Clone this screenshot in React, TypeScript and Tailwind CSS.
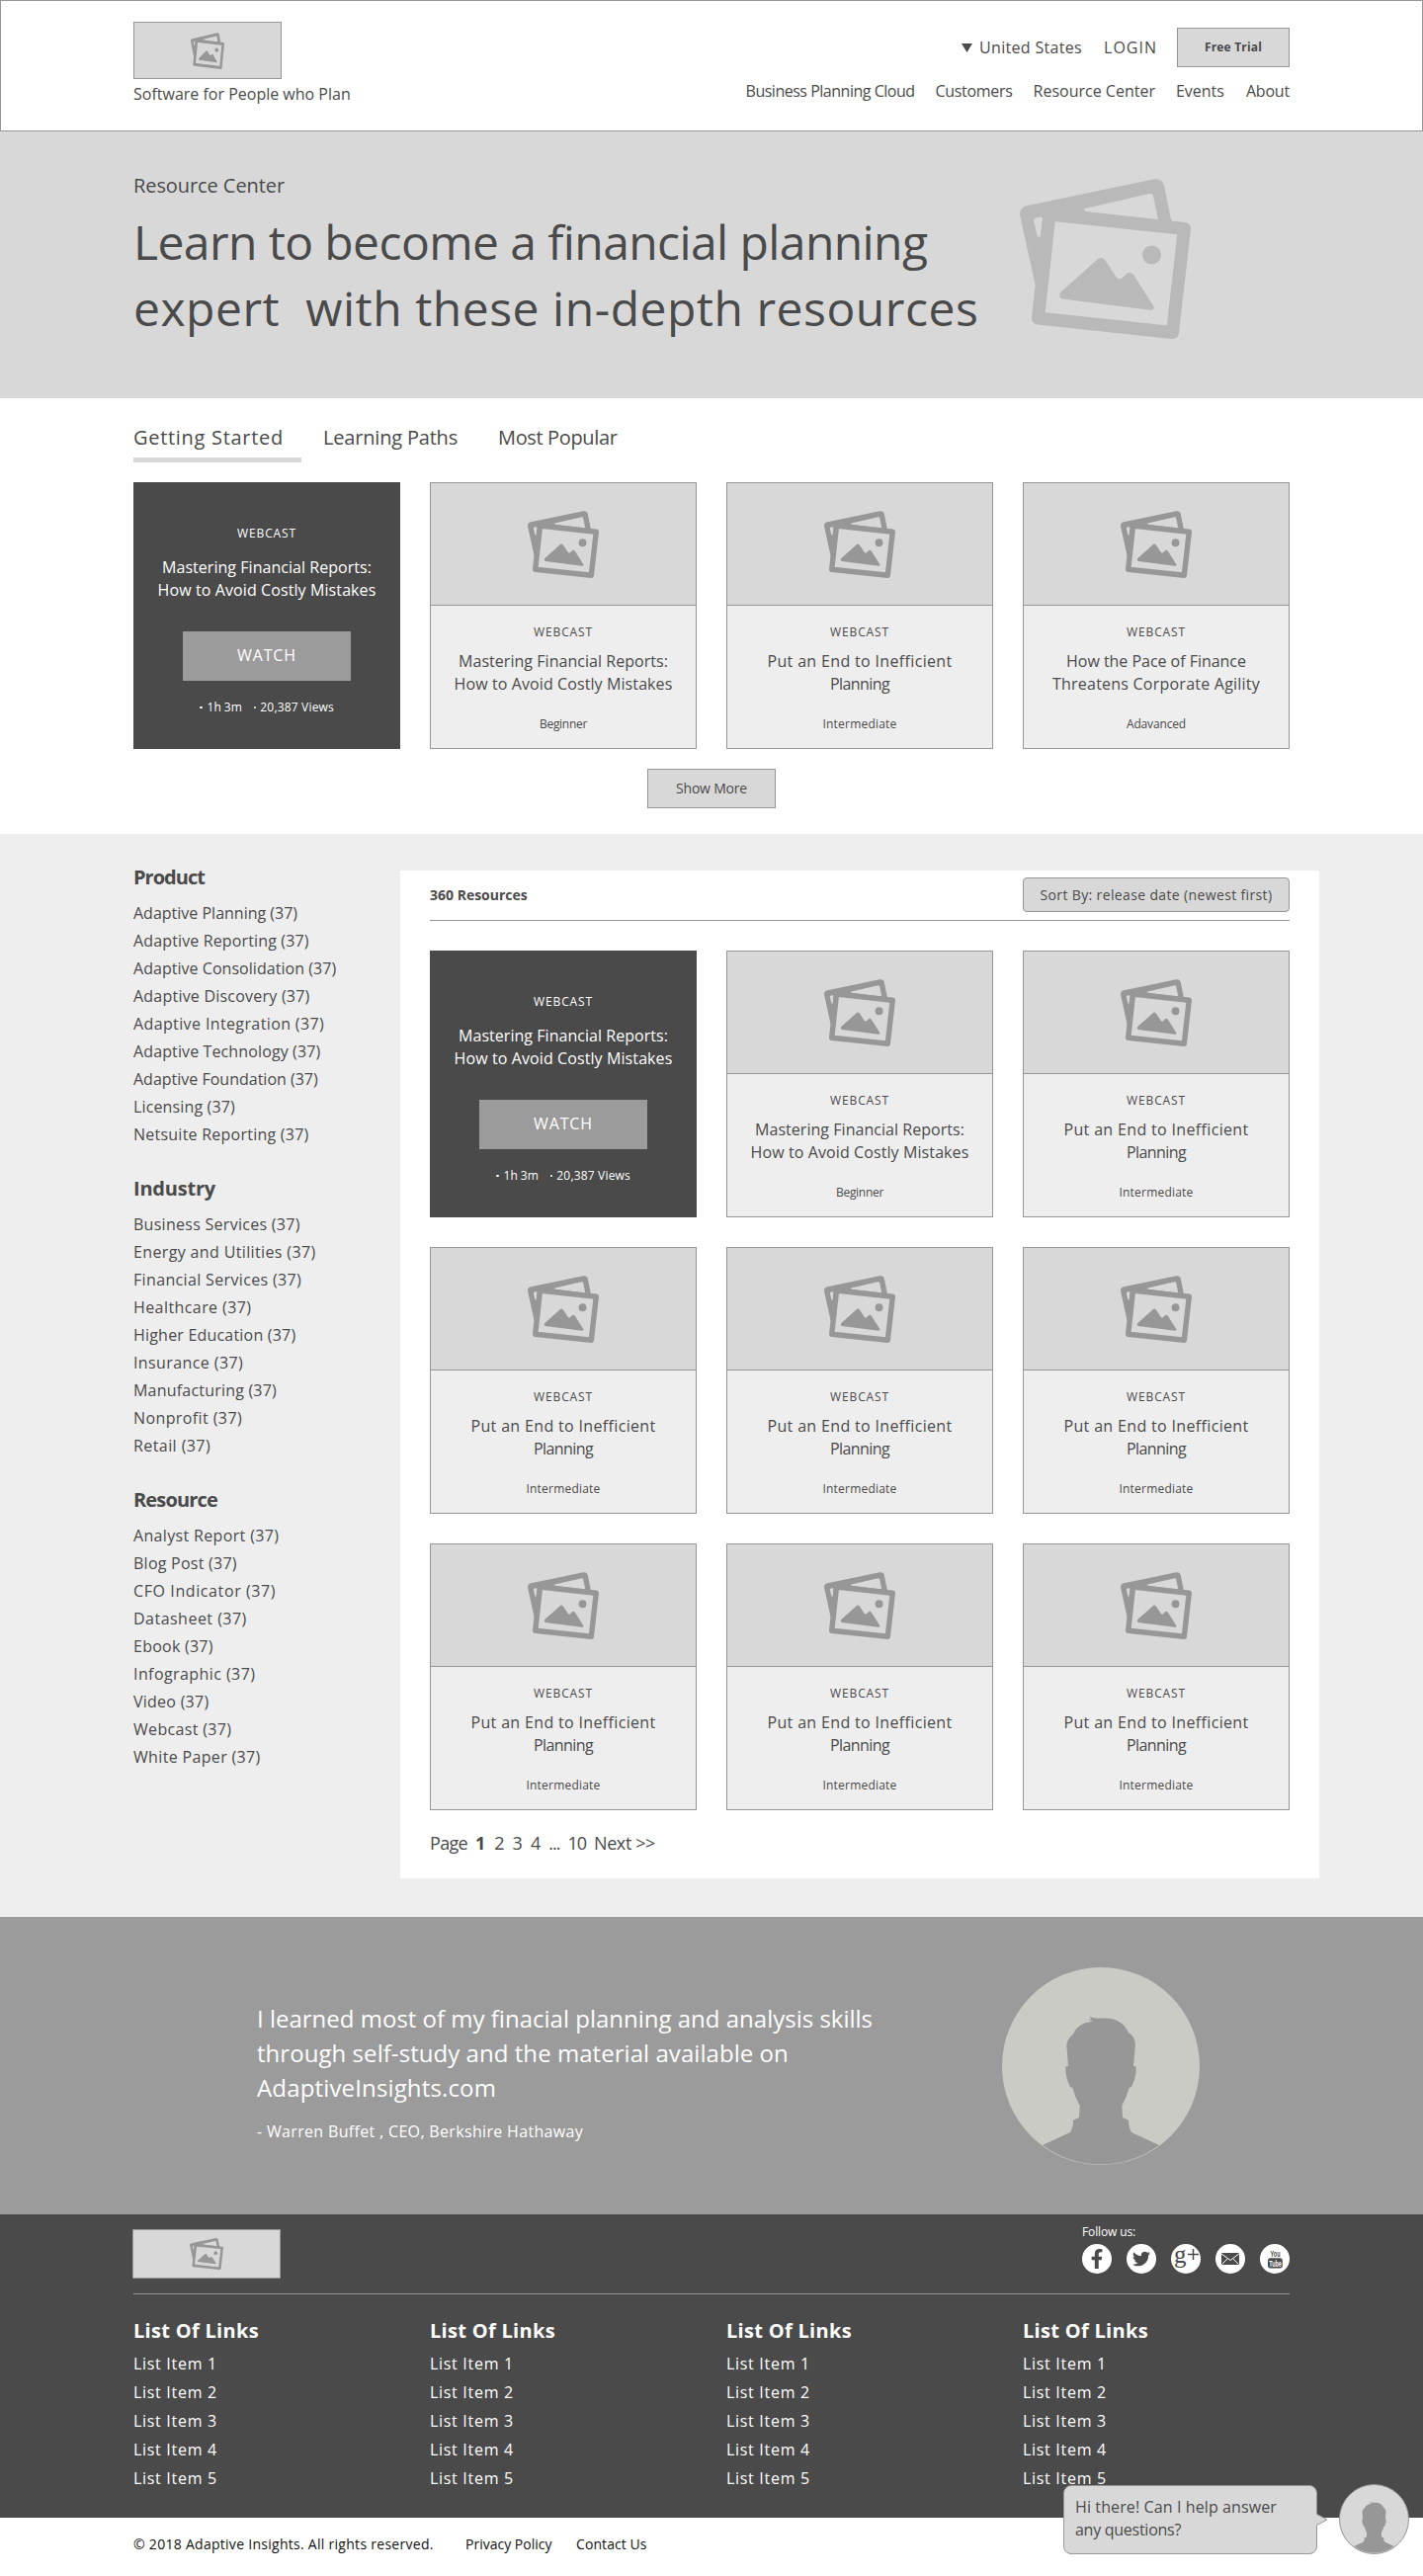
import type { ReactNode } from "react";
import { FaFacebookF, FaTwitter } from "react-icons/fa";

type Line = { text: string; tracking?: string };

const MASTERING: Line[] = [
  { text: "Mastering Financial Reports:", tracking: "tracking-[0.04px]" },
  { text: "How to Avoid Costly Mistakes", tracking: "tracking-[0.1px]" },
];
const INEFFICIENT: Line[] = [
  { text: "Put an End to Inefficient", tracking: "tracking-[0.34px]" },
  { text: "Planning", tracking: "tracking-[-0.59px]" },
];
const PACE: Line[] = [
  { text: "How the Pace of Finance", tracking: "tracking-[-0.03px]" },
  { text: "Threatens Corporate Agility", tracking: "tracking-[0.23px]" },
];

const LEVELS: Record<string, string> = {
  Beginner: "tracking-[-0.3px]",
  Intermediate: "tracking-[0.21px]",
  Adavanced: "tracking-[-0.16px]",
};

const FILTERS: { title: string; tracking: string; items: Line[] }[] = [
  {
    title: "Product",
    tracking: "tracking-[-0.97px]",
    items: [
      { text: "Adaptive Planning" },
      { text: "Adaptive Reporting", tracking: "tracking-[0.14px]" },
      { text: "Adaptive Consolidation", tracking: "tracking-[0.04px]" },
      { text: "Adaptive Discovery", tracking: "tracking-[0.22px]" },
      { text: "Adaptive Integration", tracking: "tracking-[0.38px]" },
      { text: "Adaptive Technology", tracking: "tracking-[0.12px]" },
      { text: "Adaptive Foundation" },
      { text: "Licensing", tracking: "tracking-[0.14px]" },
      { text: "Netsuite Reporting", tracking: "tracking-[0.24px]" },
    ],
  },
  {
    title: "Industry",
    tracking: "tracking-[-0.21px]",
    items: [
      { text: "Business Services", tracking: "tracking-[0.28px]" },
      { text: "Energy and Utilities", tracking: "tracking-[0.36px]" },
      { text: "Financial Services", tracking: "tracking-[0.35px]" },
      { text: "Healthcare", tracking: "tracking-[0.42px]" },
      { text: "Higher Education", tracking: "tracking-[0.2px]" },
      { text: "Insurance", tracking: "tracking-[0.4px]" },
      { text: "Manufacturing", tracking: "tracking-[0.2px]" },
      { text: "Nonprofit", tracking: "tracking-[0.4px]" },
      { text: "Retail", tracking: "tracking-[0.42px]" },
    ],
  },
  {
    title: "Resource",
    tracking: "tracking-[-0.83px]",
    items: [
      { text: "Analyst Report", tracking: "tracking-[0.34px]" },
      { text: "Blog Post", tracking: "tracking-[0.25px]" },
      { text: "CFO Indicator", tracking: "tracking-[0.6px]" },
      { text: "Datasheet", tracking: "tracking-[0.48px]" },
      { text: "Ebook", tracking: "tracking-[0.25px]" },
      { text: "Infographic", tracking: "tracking-[0.42px]" },
      { text: "Video", tracking: "tracking-[0.25px]" },
      { text: "Webcast", tracking: "tracking-[0.34px]" },
      { text: "White Paper", tracking: "tracking-[0.34px]" },
    ],
  },
];

function Pictures({ className }: { className: string }) {
  return (
    <svg viewBox="0 0 173 162" preserveAspectRatio="none" className={className} fill="currentColor">
      <path
        fillRule="evenodd"
        d="M15.6 107 L.3 38 Q-1 29 8 27 L135 .6 Q144 -1 146 7 L153 41 L155 48 L30 36 L20 105Z M66 30 L131 15 Q134 14.5 135 17 L140 41.5 L67 33 Q64 31.5 66 30Z M14 42 Q14.5 39.5 19 38.7 Q23.5 38 23 42 L21 57 Q19.5 61 17.5 57Z"
      />
      <path
        d="M30 36 L166.5 50.5 L154.5 155.5 L18.5 141Z"
        fill="none"
        stroke="currentColor"
        strokeWidth="13"
        strokeLinejoin="round"
      />
      <circle cx="133.500" cy="77" r="9.500" />
      <path d="M78 82 Q82 78 86 82 L98 100 Q101 102.500 104 100 L108 96 Q112 93.500 115 97 L135.500 129 Q136.500 133 132 132.800 L43 121.500 Q38.500 120 41 115Z" />
    </svg>
  );
}

function Person({ className }: { className: string }) {
  return (
    <svg viewBox="0 0 200 200" className={className}>
      <path
        fill="#979797"
        d="M67 100 L65.300 79 Q65.500 73 72 67.500 Q76 57 90 55 L92 54.500 L86 52.500 L90.500 52.800 L88.500 49.500 Q91 51.500 96 51.500 H107 Q122 53 128 66 Q135 70 134.800 79 L133 100 L135.700 100.500 Q136 111 131 121 L128.500 122 Q126.500 131 121.300 140 L122 152 L128 154.700 Q128 162 131 167 L159 180 A99 99 0 0 1 41 180 L69 167 Q72 162 72 154.700 L78 152 L78.700 140 Q73.500 131 71.500 122 L69 121 Q64 111 64.300 100.500Z"
      />
    </svg>
  );
}

function WatchCard() {
  return (
    <article className="flex h-[270px] flex-col items-center bg-[#4a4a4a] pt-[42px] text-white">
      <p className="text-xs leading-5 tracking-[0.88px]">WEBCAST</p>
      <h3 className="mt-[13px] text-center text-base leading-[23px]">
        {MASTERING.map((l) => (
          <span key={l.text} className={`block whitespace-nowrap ${l.tracking}`}>
            {l.text}
          </span>
        ))}
      </h3>
      <button className="mt-[30px] h-[50px] w-[170px] bg-[#9b9b9b] pb-[3px] text-base tracking-[0.88px]">WATCH</button>
      <div className="mt-[17px] flex items-center gap-3 text-xs leading-5">
        <span className="flex items-center gap-[5px]">
          <i className="size-[2.500px] rounded-full bg-white" />
          1h 3m
        </span>
        <span className="flex items-center gap-1 tracking-[0.18px]">
          <i className="size-[2.500px] rounded-full bg-white" />
          20,387 Views
        </span>
      </div>
    </article>
  );
}

function ResourceCard({ title, level }: { title: Line[]; level: string }) {
  return (
    <article className="h-[270px] border border-[#979797] bg-[#eeeeee] text-center">
      <div className="flex h-[124px] items-center justify-center border-b border-[#979797] bg-[#d8d8d8]">
        <Pictures className="h-[68px] w-[72px] text-[#979797]" />
      </div>
      <p className="mt-[17px] text-xs leading-5 tracking-[0.88px]">WEBCAST</p>
      <h3 className="mt-2 text-base leading-[23px]">
        {title.map((l) => (
          <span key={l.text} className={`block whitespace-nowrap ${l.tracking}`}>
            {l.text}
          </span>
        ))}
      </h3>
      <p className={`mt-[19px] text-xs leading-5 ${LEVELS[level]}`}>{level}</p>
    </article>
  );
}

function Social({ children }: { children: ReactNode }) {
  return (
    <a className="flex size-[30px] items-center justify-center rounded-full bg-white text-[#4a4a4a]">{children}</a>
  );
}

function Header() {
  return (
    <header className="h-[133px] border border-[#979797] bg-white">
      <div className="mx-auto flex w-[1170px] justify-between">
        <div className="pt-[21px]">
          <div className="flex h-[58px] w-[150px] items-center justify-center border border-[#979797] bg-[#d8d8d8]">
            <Pictures className="h-[37px] w-[34px] text-[#979797]" />
          </div>
          <p className="mt-[5px] leading-5">Software for People who Plan</p>
        </div>
        <div className="flex flex-col items-end pt-[27px]">
          <div className="flex h-10 items-center">
            <svg viewBox="0 0 11 9" className="mr-[7px] h-[9px] w-[11px]" fill="#4a4a4a">
              <path d="M0 0H11L5.500 9Z" />
            </svg>
            <span className="mr-[22px] tracking-[0.32px]">United States</span>
            <span className="mr-5 tracking-[1px]">LOGIN</span>
            <button className="h-10 w-[114px] border border-[#979797] bg-[#d8d8d8] text-xs font-bold tracking-[0.17px]">
              Free Trial
            </button>
          </div>
          <nav className="mt-[14px] flex gap-[21px] leading-5">
            <a className="tracking-[-0.49px]">Business Planning Cloud</a>
            <a className="tracking-[-0.31px]">Customers</a>
            <a>Resource Center</a>
            <a className="mr-px">Events</a>
            <a className="tracking-[-0.2px]">About</a>
          </nav>
        </div>
      </div>
    </header>
  );
}

function Hero() {
  return (
    <section className="h-[270px] bg-[#d8d8d8]">
      <div className="mx-auto flex w-[1170px]">
        <div className="w-[897px] pt-[41px]">
          <p className="text-xl leading-7 tracking-[-0.08px]">Resource Center</p>
          <h1 className="mt-[9px] text-5xl leading-[67px]">
            <span className="block whitespace-pre tracking-[-0.59px]">Learn to become a financial planning</span>
            <span className="block whitespace-pre tracking-[0.52px]">expert  with these in-depth resources</span>
          </h1>
        </div>
        <Pictures className="mt-12 h-[162px] w-[173px] text-[#b9b9b9]" />
      </div>
    </section>
  );
}

function Featured() {
  return (
    <section className="h-[441px] bg-white pt-[26px]">
      <div className="mx-auto w-[1170px]">
        <div className="flex text-xl leading-7">
          <a className="w-[170px] border-b-[5px] border-[#d8d8d8] pb-1.5 tracking-[0.7px]">Getting Started</a>
          <a className="ml-[22px] w-[177px] tracking-[-0.19px]">Learning Paths</a>
          <a className="tracking-[-0.36px]">Most Popular</a>
        </div>
        <div className="mt-5 grid grid-cols-4 gap-[30px]">
          <WatchCard />
          <ResourceCard title={MASTERING} level="Beginner" />
          <ResourceCard title={INEFFICIENT} level="Intermediate" />
          <ResourceCard title={PACE} level="Adavanced" />
        </div>
        <button className="mx-auto mt-5 block h-10 w-[130px] border border-[#979797] bg-[#d8d8d8] text-sm tracking-[-0.2px]">
          Show More
        </button>
      </div>
    </section>
  );
}

function Library() {
  return (
    <section className="h-[1096px] bg-[#eeeeee]">
      <div className="ml-[135px] flex w-[1200px]">
        <aside className="flex w-[270px] flex-col gap-[27px] pt-[30px]">
          {FILTERS.map((group) => (
            <div key={group.title}>
              <h2 className={`text-xl leading-7 font-bold ${group.tracking}`}>{group.title}</h2>
              <ul className="mt-2 leading-7">
                {group.items.map((item) => (
                  <li key={item.text} className={item.tracking}>
                    {item.text} (37)
                  </li>
                ))}
              </ul>
            </div>
          ))}
        </aside>
        <main className="mt-[37px] h-[1020px] w-[930px] bg-white px-[30px]">
          <div className="flex h-[51px] items-start justify-between border-b border-[#979797] pt-[7px] text-sm">
            <h2 className="leading-[35px] font-bold">360 Resources</h2>
            <button className="h-[35px] w-[270px] rounded border border-[#979797] bg-[#d8d8d8] tracking-[0.36px] whitespace-nowrap">
              Sort By: release date (newest first)
            </button>
          </div>
          <div className="mt-[30px] grid grid-cols-3 gap-[30px]">
            <WatchCard />
            <ResourceCard title={MASTERING} level="Beginner" />
            {Array.from({ length: 7 }, (_, i) => (
              <ResourceCard key={i} title={INEFFICIENT} level="Intermediate" />
            ))}
          </div>
          <nav className="mt-[19px] flex gap-2 text-lg leading-7">
            <span className="tracking-[-0.68px]">Page</span>
            <b>1</b>
            <span className="ml-px">2</span>
            <span>3</span>
            <span>4</span>
            <span className="tracking-[-1px]">...</span>
            <span className="tracking-[-1px]">10</span>
            <span className="tracking-[-0.39px]">Next &gt;&gt;</span>
          </nav>
        </main>
      </div>
    </section>
  );
}

function Testimonial() {
  return (
    <section className="flex h-[301px] bg-[#9b9b9b] pl-[260px] text-white">
      <div className="w-[754px] pt-[85px]">
        <blockquote className="text-2xl leading-[35px] whitespace-nowrap">
          <span className="block">I learned most of my finacial planning and analysis skills</span>
          <span className="block tracking-[0.05px]">through self-study and the material available on</span>
          <span className="block tracking-[0.15px]">AdaptiveInsights.com</span>
        </blockquote>
        <p className="mt-[17px] leading-5 tracking-[0.33px]">- Warren Buffet , CEO, Berkshire Hathaway</p>
      </div>
      <div className="mt-[51px] size-[200px] rounded-full bg-[#cbcbc6]">
        <Person className="size-full" />
      </div>
    </section>
  );
}

function Footer() {
  return (
    <footer>
      <div className="h-[307px] bg-[#4a4a4a] text-white">
        <div className="mx-auto w-[1170px]">
          <div className="flex h-[81px] items-start justify-between border-b border-[#979797]">
            <div className="mt-[15px] -ml-px flex h-[50px] w-[150px] items-center justify-center border border-[#979797] bg-[#d8d8d8]">
              <Pictures className="h-8 w-[34px] text-[#979797]" />
            </div>
            <div className="pt-2.5">
              <p className="text-xs leading-4 tracking-[-0.13px]">Follow us:</p>
              <div className="mt-1 flex gap-[15px]">
                <Social>
                  <FaFacebookF size={20} />
                </Social>
                <Social>
                  <FaTwitter size={18} />
                </Social>
                <Social>
                  <svg viewBox="0 0 30 30" className="size-[30px] overflow-visible" fill="currentColor">
                    <text x="3" y="19" fontFamily="Liberation Serif" fontSize="25">
                      g
                    </text>
                    <path d="M17 10.500H28M22.500 5V16" stroke="currentColor" strokeWidth="1.500" />
                  </svg>
                </Social>
                <Social>
                  <svg viewBox="0 0 18 12" className="h-3 w-[18px]">
                    <rect width="18" height="12" fill="#4a4a4a" />
                    <path d="M0 .8 9 7.500 18 .8M.5 11.500 6.300 5.800M17.500 11.500 11.700 5.800" fill="none" stroke="#fff" />
                  </svg>
                </Social>
                <Social>
                  <svg viewBox="0 0 30 30" className="size-[30px]" fontFamily="Liberation Sans" fontWeight="bold">
                    <text x="10.500" y="13.300" fontSize="8.500" textLength="10" lengthAdjust="spacingAndGlyphs" fill="#4a4a4a">
                      You
                    </text>
                    <rect x="8" y="14.200" width="14.800" height="10.300" rx="2.500" fill="#4a4a4a" />
                    <text x="9.300" y="22.600" fontSize="8.500" textLength="12.500" lengthAdjust="spacingAndGlyphs" fill="#fff">
                      Tube
                    </text>
                  </svg>
                </Social>
              </div>
            </div>
          </div>
          <div className="mt-[23px] grid grid-cols-4 gap-[30px]">
            {[0, 1, 2, 3].map((col) => (
              <div key={col}>
                <h2 className="text-xl leading-7 font-bold tracking-[0.3px]">List Of Links</h2>
                <ul className="mt-[5px] leading-[29px] tracking-[0.7px]">
                  {[1, 2, 3, 4, 5].map((n) => (
                    <li key={n}>List Item {n}</li>
                  ))}
                </ul>
              </div>
            ))}
          </div>
        </div>
      </div>
      <div className="h-[59px] bg-white pt-[17px] text-sm leading-5 text-[#111111]">
        <div className="mx-auto flex w-[1170px]">
          <span className="w-[336px] tracking-[0.28px]">© 2018 Adaptive Insights. All rights reserved.</span>
          <a className="w-[112px]">Privacy Policy</a>
          <a className="tracking-[0.08px]">Contact Us</a>
        </div>
      </div>
    </footer>
  );
}

function Chat() {
  return (
    <div className="absolute right-[14px] bottom-[22px] flex items-center">
      <div className="h-[70px] w-[257px] rounded-lg border border-[#979797] bg-[#d8d8d8] pt-2.5 pl-[11px] leading-[23px]">
        <span className="block tracking-[0.11px]">Hi there! Can I help answer</span>
        <span className="block tracking-[-0.27px]">any questions?</span>
      </div>
      <svg viewBox="0 0 12 12" className="z-10 mr-[11px] -ml-px h-3 w-3">
        <path d="M0 0V12L11 6Z" fill="#d8d8d8" />
        <path d="M.5 .5 11 6 .5 11.500" fill="none" stroke="#979797" />
      </svg>
      <div className="size-[71px] overflow-hidden rounded-full border border-[#979797] bg-[#d8d8d8]">
        <Person className="size-full" />
      </div>
    </div>
  );
}

export default function App() {
  return (
    <div className="relative w-[1440px] bg-white font-['Open_Sans',sans-serif] text-base text-[#4a4a4a]">
      <Header />
      <Hero />
      <Featured />
      <Library />
      <Testimonial />
      <Footer />
      <Chat />
    </div>
  );
}
